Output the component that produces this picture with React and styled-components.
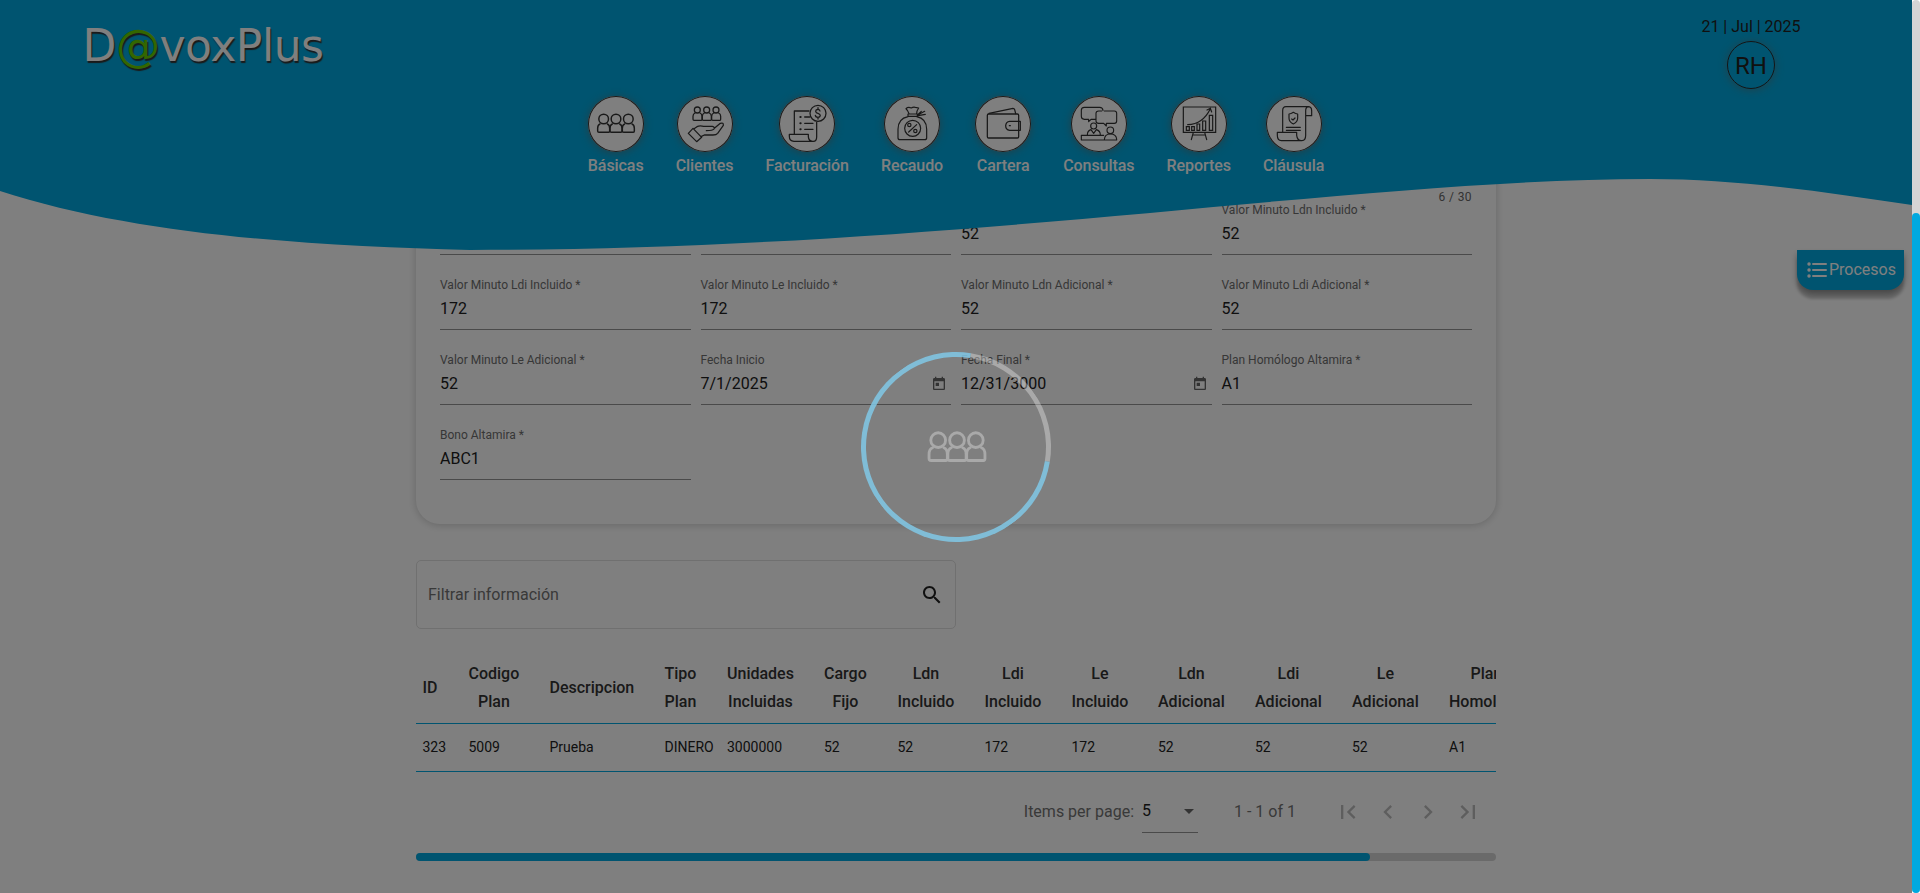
import React from "react";
import styled, { createGlobalStyle } from "styled-components";

const BLUE = "#00a9e0";

const GlobalStyle = createGlobalStyle`
  * { box-sizing: border-box; }
  body { margin: 0; background: #fff; font-family: Roboto, "Liberation Sans", sans-serif; }
`;

const Shell = styled.div`
  display: flex;
  height: 893px;
  overflow: hidden;
`;

const Page = styled.div`
  position: relative;
  width: 1912px;
  height: 893px;
  overflow: hidden;
  background: #fff;
  color: #212121;
`;

const PageScrollbar = styled.div`
  display: flex;
  align-items: flex-end;
  width: 8px;
  height: 893px;
  background: #d5d5d5;
  border-radius: 4px;
`;

const PageThumb = styled.div`
  width: 8px;
  height: 680px;
  background: ${BLUE};
  border-radius: 4px;
`;

/* header */
const Header = styled.header`
  position: absolute;
  inset: 0 0 auto 0;
  height: 250px;
`;

const Wave = styled.svg`
  position: absolute;
  inset: 0;
  display: block;
`;

const HeaderBody = styled.div`
  position: relative;
  display: flex;
  flex-direction: column;
`;

const TopBar = styled.div`
  display: flex;
  justify-content: space-between;
  height: 96px;
  padding: 17px 111px 0 82.5px;
`;

const Logo = styled.div`
  padding-top: 1px;
  font: 44px/56px "DejaVu Sans", sans-serif;
  letter-spacing: -0.45px;
  color: #fff;
  text-shadow: 1px 2px 1px #333;
`;

const LogoAt = styled.span`
  color: #66cc00;
`;

const UserBox = styled.div`
  display: flex;
  flex-direction: column;
  align-items: center;
  width: 100px;
`;

const Today = styled.div`
  font-size: 16px;
  line-height: 20px;
  margin-bottom: 4px;
  white-space: nowrap;
`;

const Avatar = styled.div`
  display: grid;
  place-items: center;
  width: 48px;
  height: 48px;
  padding-top: 1px;
  border: 1px solid #2a2a2a;
  border-radius: 50%;
  font-size: 24px;
  box-shadow: 0 1px 8px rgba(120, 100, 90, 0.55);
`;

const Nav = styled.nav`
  display: flex;
  justify-content: center;
  gap: 32px;
`;

const NavItem = styled.div`
  display: flex;
  flex-direction: column;
  align-items: center;
  gap: 4px;
  color: #fff;
  font-size: 16px;
  font-weight: 500;
  line-height: 19px;
  letter-spacing: -0.06px;
`;

const NavDisc = styled.div`
  width: 56px;
  height: 56px;
  background: #fff;
  border-radius: 50%;
  box-shadow: inset 0 0 0 1px #333, 0 1px 9px rgba(120, 100, 90, 0.6);
`;

const Glyph = styled.svg`
  display: block;
  fill: none;
  stroke: #333;
  stroke-width: 4.4;
  stroke-linecap: round;
  stroke-linejoin: round;
`;

/* content */
const Main = styled.main`
  display: flex;
  flex-direction: column;
  width: 1080px;
  margin: 0 auto;
`;

const FormCard = styled.section`
  height: 524px;
  padding: 190px 24px 0;
  border-radius: 0 0 24px 24px;
  box-shadow: 0 1px 9px rgba(0, 0, 0, 0.2);
`;

const Hint = styled.div`
  height: 14px;
  font-size: 12px;
  line-height: 14px;
  letter-spacing: 0.4px;
  text-align: right;
  color: #666;
`;

const Fields = styled.div`
  display: grid;
  grid-template-columns: repeat(4, 1fr);
  grid-template-rows: 51px 75px 75px 75px;
  column-gap: 10px;
`;

const Field = styled.div`
  display: flex;
  flex-direction: column;
  justify-content: flex-end;
  border-bottom: 1px solid #949494;
`;

const Label = styled.div`
  font-size: 12px;
  line-height: 14px;
  color: #6e6e6e;
  margin-bottom: 7.5px;
`;

const ValueRow = styled.div`
  display: flex;
  justify-content: space-between;
  align-items: center;
  height: 20px;
  margin-bottom: 10px;
  padding-right: 4px;
  font-size: 16px;
  line-height: 20px;
`;

const SolidIcon = styled.svg`
  display: block;
  flex: none;
  fill: ${(p) => p.$color || "#212121"};
`;

const Filter = styled.div`
  display: flex;
  align-items: center;
  justify-content: space-between;
  width: 540px;
  height: 69px;
  margin-top: 36px;
  padding: 1px 11px 0;
  border: 1px solid #e0e0e0;
  border-radius: 5px;
  font-size: 16px;
  color: #737373;
`;

const FilterText = styled.span`
  padding-bottom: 1px;
`;

const Table = styled.div`
  margin-top: 25px;
  overflow: hidden;
`;

const TableRow = styled.div`
  display: grid;
  grid-template-columns: 46px 81px 115px 62.5px 97px 73.5px 87px 87px 86.5px 97px 97px 97px 100px;
  align-items: center;
  width: 1132.5px;
  height: ${(p) => (p.$head ? 70 : 48)}px;
  padding: 0 0 2px 6.5px;
  border-bottom: 1px solid ${BLUE};
  font-size: 14px;
`;

const HeadCell = styled.div`
  justify-self: start;
  display: flex;
  flex-direction: column;
  align-items: center;
  font-size: 16px;
  font-weight: 500;
  line-height: 28px;
  color: #333;
  white-space: nowrap;
`;

const Paginator = styled.div`
  display: flex;
  align-items: center;
  justify-content: flex-end;
  height: 80px;
  padding-right: 8px;
  font-size: 16px;
  line-height: 18px;
  color: #737373;
`;

const PagerText = styled.span`
  padding-bottom: 1px;
  width: ${(p) => (p.$width ? `${p.$width}px` : "auto")};
`;

const PageSize = styled.div`
  display: flex;
  align-items: center;
  justify-content: space-between;
  width: 56px;
  height: 42px;
  margin: 0 36px 0 8px;
  padding-bottom: 1px;
  border-bottom: 1px solid #949494;
  color: #212121;
`;

const Caret = styled.i`
  border: 5px solid transparent;
  border-top-color: #666;
  border-bottom: 0;
  margin-right: 4px;
`;

const PageButton = styled.div`
  display: grid;
  place-items: center;
  width: 40px;
  height: 40px;
`;

const TableScroll = styled.div`
  height: 8px;
  margin-top: 1px;
  border-radius: 4px;
  background: #d5d5d5;
`;

const TableThumb = styled.div`
  width: 954px;
  height: 8px;
  border-radius: 4px;
  background: ${BLUE};
`;

const ProcessButton = styled.div`
  position: absolute;
  top: 250px;
  right: 8px;
  display: flex;
  align-items: center;
  gap: 2px;
  width: 107px;
  height: 40px;
  padding: 0 0 2px 10px;
  border-radius: 0 0 16px 16px;
  background: ${BLUE};
  color: #fff;
  font-size: 16px;
  box-shadow: 0 9px 3px rgba(0, 0, 0, 0.18), 0 4px 6px rgba(0, 0, 0, 0.32);
`;

const ListGlyph = styled.svg`
  display: block;
  margin-top: 2px;
  fill: none;
  stroke: #fff;
  stroke-width: 2;
  stroke-linecap: round;
`;

/* loading overlay */
const Backdrop = styled.div`
  position: absolute;
  inset: 0;
  display: grid;
  place-items: center;
  background: rgba(0, 0, 0, 0.5);
`;

const Loader = styled.div`
  display: grid;
  place-items: center;
  width: 190px;
  height: 190px;
`;

const Ring = styled.div`
  grid-area: 1 / 1;
  width: 190px;
  height: 190px;
  border: 5px solid rgba(129, 200, 230, 0.86);
  border-top-color: rgba(255, 255, 255, 0.33);
  border-radius: 50%;
  transform: rotate(54deg);
`;

const LoaderGlyph = styled(Glyph)`
  grid-area: 1 / 1;
  margin-left: 2px;
  stroke: #a9a9a9;
  stroke-width: 5.6;
`;

const People = () => (
  <>
    {[0, 37, 74].map((x) => (
      <g key={x} transform={`translate(${x} 0)`}>
        <circle cx="47" cy="69" r="14.5" />
        <path d="M36 84C30 86 29 90 29 97v8q0 4 4 4h29q3 0 3-4v-8c0-7-1-11-7-13" />
      </g>
    ))}
  </>
);

const ICONS = {
  basicas: <People />,
  clientes: (
    <g strokeWidth="3.8">
      {[0, 28, 56].map((x) => (
        <g key={x} transform={`translate(${x} 0)`}>
          <circle cx="61" cy="42" r="9" />
          <path d="M54 51q-6 3-6 10v9q0 3 3 3h22q2 0 2-3v-9q0-7-6-10" />
        </g>
      ))}
      <path d="M34 112L48 97L74 124L59 137ZM50 99L60 92Q68 88 80 91L106 91Q114 93 111 99Q108 104 88 104M112 97L130 82Q140 79 139 88L122 112Q118 117 108 117H82L72 122" />
    </g>
  ),
  facturacion: (
    <g strokeWidth="3.8">
      <path d="M46 113V45H90M113 79V122Q113 136 103 136H45Q31 136 31 121V115H88V122Q89 136 101 136M77 63H92M77 82H102M77 100H102" />
      <path strokeWidth="6" d="M64 63h1M64 82h1M64 100h1" />
      <circle cx="117" cy="52" r="24" />
      <path d="M123 45Q122 40 116 40Q110 41 110 46Q111 51 117 52Q124 54 124 59Q123 64 117 64Q110 64 109 58M117 35V40M117 64V69" />
    </g>
  ),
  recaudo: (
    <g strokeWidth="3.6">
      <path d="M72 62C52 66 42 80 42 100V125Q42 131 48 131H122Q128 131 128 125V100C128 80 118 66 98 62M72 54H100V61H72ZM75 53Q72 43 66 38Q72 32 82 36Q88 32 94 34L104 36Q98 44 98 53M101 56L112 46M101 57L122 46M102 59L124 55" />
      <circle cx="86" cy="97" r="24" />
      <circle cx="76" cy="87" r="5" />
      <circle cx="94" cy="105" r="5" />
      <path d="M74 108L98 86" />
    </g>
  ),
  cartera: (
    <g strokeWidth="3.8">
      <rect x="37" y="54" width="94" height="72" rx="4" />
      <path d="M42 52L114 37Q118 37 119 41L122 53M136 76V103H104Q92 101 92 89Q93 77 104 76ZM103 89h3" />
    </g>
  ),
  consultas: (
    <g strokeWidth="3.4">
      <path d="M73 70H60L53 77V70H40Q31 70 31 61V43Q31 34 40 34H86Q95 34 96 43M92 45H83Q75 45 75 52V75Q75 82 83 82H98L106 90V82H130Q137 82 137 75V52Q137 45 130 45H100" />
      <circle cx="68" cy="90" r="9" />
      <path d="M49 117Q49 104 60 101L68 112L76 101Q88 104 88 117M98 118H31V132H137V130Q136 114 118 114Q101 114 100 131" />
      <circle cx="118" cy="103" r="10" />
    </g>
  ),
  reportes: (
    <g strokeWidth="3.6" strokeLinejoin="miter">
      <path d="M37 33H134V109H37ZM67 109L61 131M101 109L107 131M65 117H103M46 92H55V103H46ZM62 92H70V103H62ZM78 84H86V103H78ZM95 75H104V103H95ZM115 58H125V103H115ZM50 86Q96 84 118 38M108 42L118 37L122 48" />
    </g>
  ),
  clausula: (
    <g strokeWidth="3.6">
      <path d="M50 108V44Q50 32 60 32H126Q137 32 137 44V59H119M128 32Q119 33 119 44V118Q119 134 108 134H46Q34 134 34 118V109H92V118Q94 134 106 134M82 49Q89 54 95 54V66Q95 78 82 84Q69 78 69 66V54Q75 54 82 49ZM77 69L81 72L87 66M61 94H103M61 103H103" />
    </g>
  ),
};

const NAV = [
  ["Básicas", "basicas"],
  ["Clientes", "clientes"],
  ["Facturación", "facturacion"],
  ["Recaudo", "recaudo"],
  ["Cartera", "cartera"],
  ["Consultas", "consultas"],
  ["Reportes", "reportes"],
  ["Cláusula", "clausula"],
];

const FIELDS = [
  {},
  {},
  { value: "52" },
  { label: "Valor Minuto Ldn Incluido *", value: "52" },
  { label: "Valor Minuto Ldi Incluido *", value: "172" },
  { label: "Valor Minuto Le Incluido *", value: "172" },
  { label: "Valor Minuto Ldn Adicional *", value: "52" },
  { label: "Valor Minuto Ldi Adicional *", value: "52" },
  { label: "Valor Minuto Le Adicional *", value: "52" },
  { label: "Fecha Inicio", value: "7/1/2025", date: true },
  { label: "Fecha Final *", value: "12/31/3000", date: true },
  { label: "Plan Homólogo Altamira *", value: "A1" },
  { label: "Bono Altamira *", value: "ABC1" },
];

const COLUMNS = [
  [["ID"], "323"],
  [["Codigo", "Plan"], "5009"],
  [["Descripcion"], "Prueba"],
  [["Tipo", "Plan"], "DINERO"],
  [["Unidades", "Incluidas"], "3000000"],
  [["Cargo", "Fijo"], "52"],
  [["Ldn", "Incluido"], "52"],
  [["Ldi", "Incluido"], "172"],
  [["Le", "Incluido"], "172"],
  [["Ldn", "Adicional"], "52"],
  [["Ldi", "Adicional"], "52"],
  [["Le", "Adicional"], "52"],
  [["Plan", "Homologo"], "A1"],
];

const PAGER = [
  "M18.41 16.59L13.82 12l4.59-4.59L17 6l-6 6 6 6zM6 6h2v12H6z",
  "M15.41 7.41L14 6l-6 6 6 6 1.41-1.41L10.83 12z",
  "M10 6L8.59 7.41 13.17 12l-4.58 4.59L10 18l6-6z",
  "M5.59 7.41L10.18 12l-4.59 4.59L7 18l6-6-6-6zM16 6h2v12h-2z",
];

const TODAY =
  "M19 3h-1V1h-2v2H8V1H6v2H5c-1.11 0-1.99.9-1.99 2L3 19c0 1.1.89 2 2 2h14c1.1 0 2-.9 2-2V5c0-1.1-.9-2-2-2zm0 16H5V8h14v11zM7 10h5v5H7z";
const SEARCH =
  "M15.5 14h-.79l-.28-.27C15.41 12.59 16 11.11 16 9.5 16 5.91 13.09 3 9.5 3S3 5.91 3 9.5 5.91 16 9.5 16c1.61 0 3.09-.59 4.23-1.57l.27.28v.79l5 4.99L20.49 19l-4.99-5zm-6 0C7.01 14 5 11.99 5 9.5S7.01 5 9.5 5 14 7.01 14 9.5 11.99 14 9.5 14z";

function Solid({ d, size, color }) {
  return (
    <SolidIcon width={size} height={size} viewBox="0 0 24 24" $color={color}>
      <path d={d} />
    </SolidIcon>
  );
}

export default function App() {
  return (
    <Shell>
      <GlobalStyle />
      <Page>
        <Main>
          <FormCard>
            <Hint>6 / 30</Hint>
            <Fields>
              {FIELDS.map((f, i) => (
                <Field key={i}>
                  {f.label && <Label>{f.label}</Label>}
                  {f.value && (
                    <ValueRow>
                      {f.value}
                      {f.date && <Solid d={TODAY} size={16} color="#666" />}
                    </ValueRow>
                  )}
                </Field>
              ))}
            </Fields>
          </FormCard>
          <Filter>
            <FilterText>Filtrar información</FilterText>
            <Solid d={SEARCH} size={24} />
          </Filter>
          <Table>
            <TableRow $head>
              {COLUMNS.map(([lines], i) => (
                <HeadCell key={i}>
                  {lines.map((l) => (
                    <span key={l}>{l}</span>
                  ))}
                </HeadCell>
              ))}
            </TableRow>
            <TableRow>
              {COLUMNS.map(([, value], i) => (
                <span key={i}>{value}</span>
              ))}
            </TableRow>
          </Table>
          <Paginator>
            <PagerText>Items per page:</PagerText>
            <PageSize>
              5<Caret />
            </PageSize>
            <PagerText $width={94}>1 - 1 of 1</PagerText>
            {PAGER.map((d) => (
              <PageButton key={d}>
                <Solid d={d} size={28} color="#bdbdbd" />
              </PageButton>
            ))}
          </Paginator>
          <TableScroll>
            <TableThumb />
          </TableScroll>
        </Main>

        <Header>
          <Wave width="1912" height="251" viewBox="0 0 1912 251">
            <path
              fill={BLUE}
              d="M0 0V191C135 235 310 246 470 250C960 250 1350 179 1650 179C1740 179 1830 193 1912 205V0Z"
            />
          </Wave>
          <HeaderBody>
            <TopBar>
              <Logo>
                D<LogoAt>@</LogoAt>voxPlus
              </Logo>
              <UserBox>
                <Today>21 | Jul | 2025</Today>
                <Avatar>RH</Avatar>
              </UserBox>
            </TopBar>
            <Nav>
              {NAV.map(([label, icon]) => (
                <NavItem key={label}>
                  <NavDisc>
                    <Glyph width="56" height="56" viewBox="0 0 168 168">
                      {ICONS[icon]}
                    </Glyph>
                  </NavDisc>
                  {label}
                </NavItem>
              ))}
            </Nav>
          </HeaderBody>
        </Header>

        <ProcessButton>
          <ListGlyph width="20" height="16" viewBox="0 0 20 16">
            <path d="M6 2H19M6 8H19M6 14H19" />
            <path strokeWidth="3.4" d="M2 2h.1M2 8h.1M2 14h.1" />
          </ListGlyph>
          Procesos
        </ProcessButton>

        <Backdrop>
          <Loader>
            <Ring />
            <LoaderGlyph width="60" height="31" viewBox="25 51 118 61">
              <People />
            </LoaderGlyph>
          </Loader>
        </Backdrop>
      </Page>
      <PageScrollbar>
        <PageThumb />
      </PageScrollbar>
    </Shell>
  );
}
